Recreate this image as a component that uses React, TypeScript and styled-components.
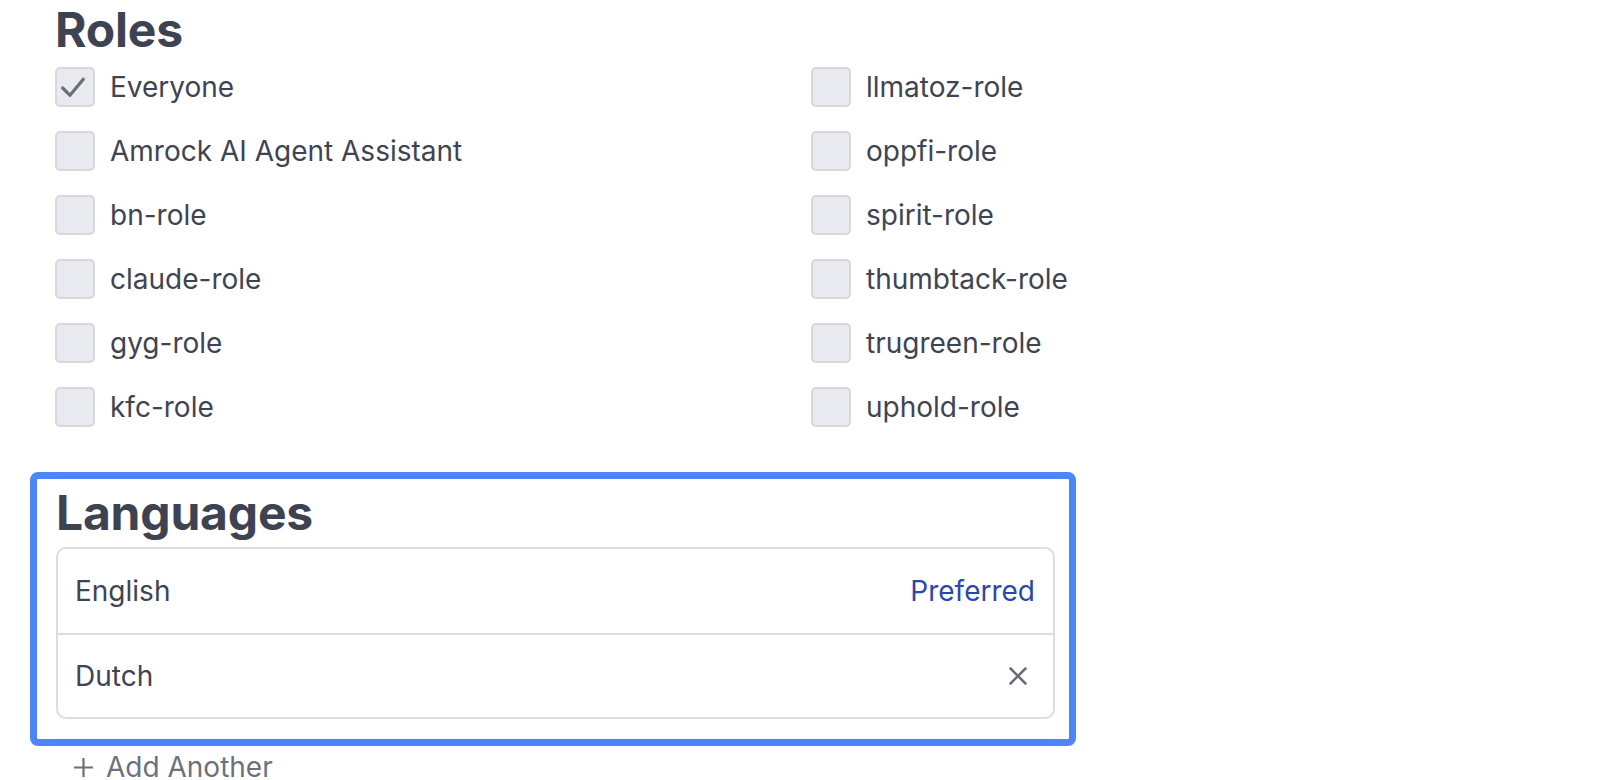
import React from "react";
import styled, { createGlobalStyle } from "styled-components";

const GlobalStyle = createGlobalStyle`
  html, body {
    margin: 0;
    padding: 0;
    background: #ffffff;
    font-family: Inter, "Noto Sans", "Liberation Sans", sans-serif;
    -webkit-font-smoothing: antialiased;
  }
  * { box-sizing: border-box; }
`;

const Page = styled.div`
  padding: 6px 0 0 55px;
  width: 1598px;
  height: 780px;
  overflow: hidden;
`;

const Heading = styled.h2`
  margin: 0;
  font-size: 48px;
  line-height: 48px;
  font-weight: 700;
  color: #3e4351;
  letter-spacing: -0.2px;
`;

const RolesHeading = styled(Heading)`
  margin-bottom: 13px;
`;

const RoleGrid = styled.div`
  display: grid;
  grid-template-columns: 756px 756px;
  grid-template-rows: repeat(6, 40px);
  grid-auto-flow: column;
  row-gap: 24px;
`;

const RoleItem = styled.label`
  display: flex;
  align-items: center;
  gap: 15px;
  font-size: 28px;
  line-height: 28px;
  color: #3f4452;
  cursor: pointer;
`;

const Box = styled.span`
  width: 40px;
  height: 40px;
  flex: none;
  border-radius: 5px;
  border: 2px solid #d6d8de;
  background: #e9eaef;
  display: flex;
  align-items: center;
  justify-content: center;
`;

const LanguagesPanel = styled.section`
  margin: 45px 0 0 -25px;
  width: 1046px;
  border: 7px solid #4b87f8;
  border-radius: 8px;
  padding: 10px 14px 20px 19px;
`;

const LangHeading = styled(Heading)`
  margin-bottom: 10px;
`;

const LangCard = styled.div`
  border: 2px solid #dcdde2;
  border-radius: 10px;
  overflow: hidden;
`;

const LangRow = styled.div<{ $divider?: boolean }>`
  height: 84px;
  display: flex;
  align-items: center;
  justify-content: space-between;
  padding: 0 18px 0 17px;
  font-size: 28px;
  line-height: 28px;
  color: #3f4452;
  border-top: ${(p) => (p.$divider ? "2px solid #dcdde2" : "none")};
`;

const Preferred = styled.span`
  color: #2c47a8;
`;

const RemoveButton = styled.button`
  border: none;
  background: none;
  padding: 0;
  margin-right: 8px;
  display: flex;
  align-items: center;
  cursor: pointer;
`;

const AddAnother = styled.button`
  margin: 9px 0 0 18px;
  border: none;
  background: none;
  padding: 0;
  display: flex;
  align-items: center;
  gap: 12px;
  font-family: inherit;
  font-size: 28px;
  line-height: 24px;
  color: #6d717d;
  cursor: pointer;
`;

const Check = () => (
  <svg width="40" height="40" viewBox="0 0 40 40" style={{ margin: -2 }}>
    <polyline
      points="7.7,21 15,28.3 28.3,12.3"
      fill="none"
      stroke="#6b6e78"
      strokeWidth="3.2"
      strokeLinecap="round"
      strokeLinejoin="round"
    />
  </svg>
);

const leftRoles = [
  { name: "Everyone", checked: true },
  { name: "Amrock AI Agent Assistant" },
  { name: "bn-role" },
  { name: "claude-role" },
  { name: "gyg-role" },
  { name: "kfc-role" },
];
const rightRoles = [
  { name: "llmatoz-role" },
  { name: "oppfi-role" },
  { name: "spirit-role" },
  { name: "thumbtack-role" },
  { name: "trugreen-role" },
  { name: "uphold-role" },
];

export default function App() {
  const roles = [...leftRoles, ...rightRoles] as { name: string; checked?: boolean }[];
  return (
    <>
      <GlobalStyle />
      <Page>
        <RolesHeading>Roles</RolesHeading>
        <RoleGrid>
          {roles.map((r) => (
            <RoleItem key={r.name}>
              <Box>{r.checked ? <Check /> : null}</Box>
              <span>{r.name}</span>
            </RoleItem>
          ))}
        </RoleGrid>

        <LanguagesPanel>
          <LangHeading>Languages</LangHeading>
          <LangCard>
            <LangRow>
              <span>English</span>
              <Preferred>Preferred</Preferred>
            </LangRow>
            <LangRow $divider>
              <span>Dutch</span>
              <RemoveButton aria-label="Remove">
                <svg width="18" height="18" viewBox="0 0 18 18">
                  <path
                    d="M1.5 1.5 L16.5 16.5 M16.5 1.5 L1.5 16.5"
                    stroke="#6b6e78"
                    strokeWidth="2.5"
                    strokeLinecap="round"
                  />
                </svg>
              </RemoveButton>
            </LangRow>
          </LangCard>
        </LanguagesPanel>

        <AddAnother>
          <svg width="21" height="21" viewBox="0 0 21 21">
            <path d="M10.5 1 V20 M1 10.5 H20" stroke="#6d717d" strokeWidth="2.2" />
          </svg>
          <span>Add Another</span>
        </AddAnother>
      </Page>
    </>
  );
}
